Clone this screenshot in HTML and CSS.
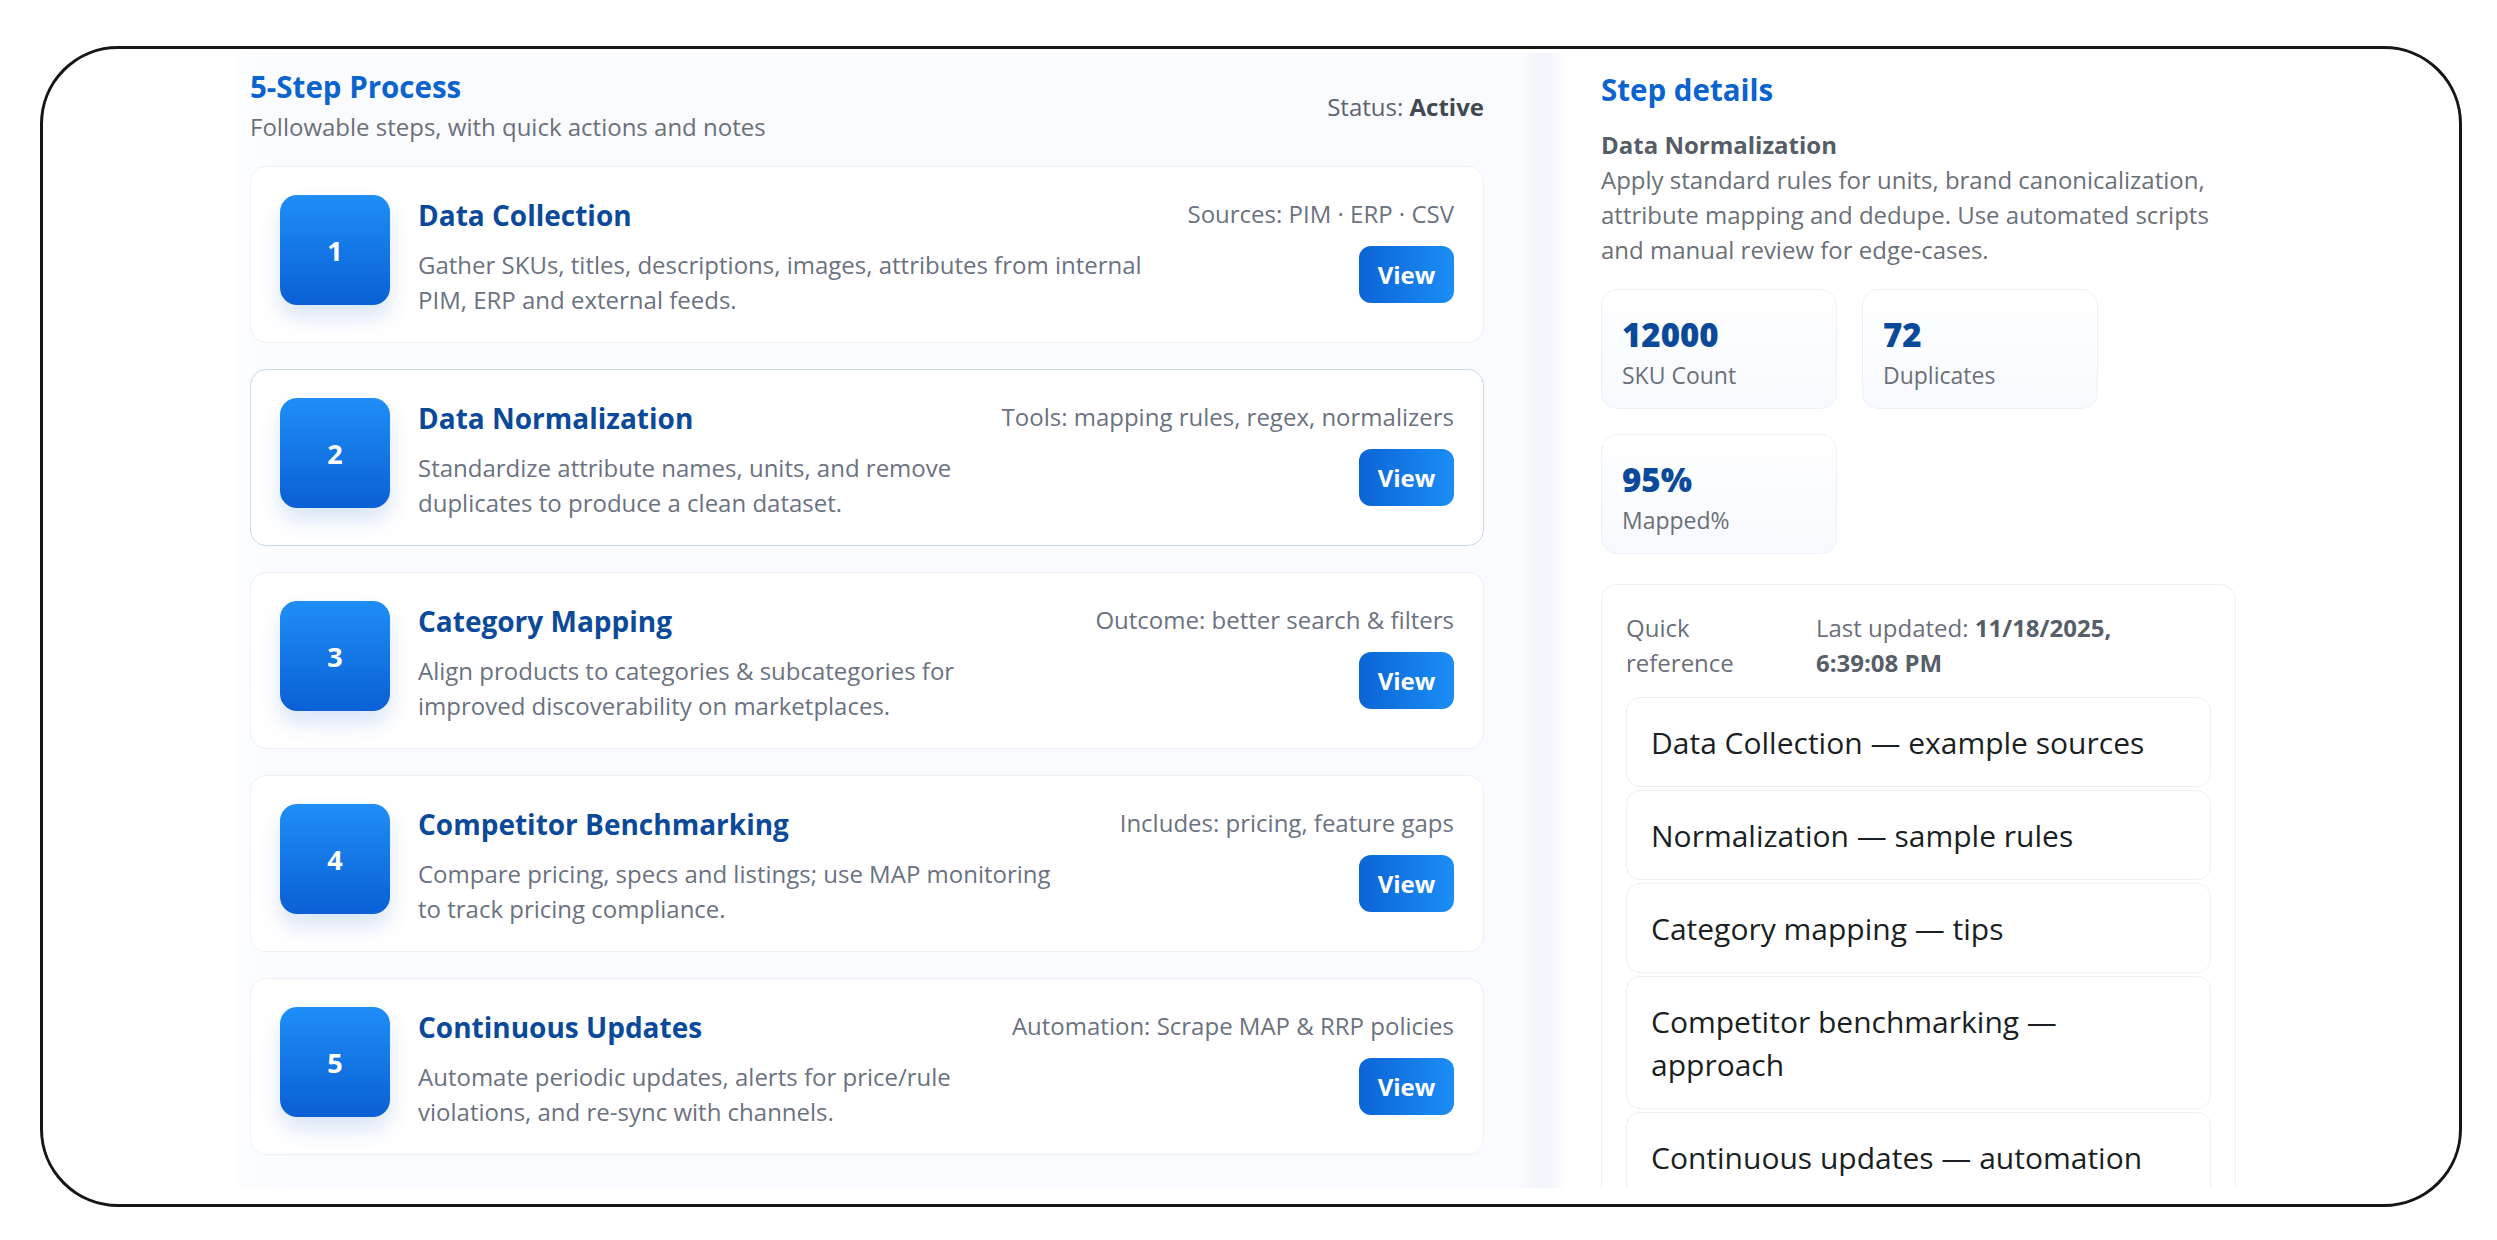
FILE: index.html
```html
<!DOCTYPE html>
<html lang="en">

<head>
  <meta charset="UTF-8">
  <meta name="viewport" content="width=device-width, initial-scale=1.0">
  <title>5-Step Process</title>
  <link rel="stylesheet" href="styles.css">
</head>

<body>
  <div class="frame">
    <div class="screen">
      <main class="layout">

        <!-- Left: the process steps -->
        <section class="process">
          <header class="process-head">
            <div>
              <h1 class="panel-title">5-Step Process</h1>
              <p class="panel-sub">Followable steps, with quick actions and notes</p>
            </div>
            <div class="status">Status: <strong>Active</strong></div>
          </header>

          <ol class="steps">
            <li class="step">
              <div class="step-num">1</div>
              <div class="step-body">
                <h2>Data Collection</h2>
                <p>Gather SKUs, titles, descriptions, images, attributes from internal PIM, ERP and external feeds.</p>
              </div>
              <div class="step-side">
                <span class="step-meta">Sources: PIM · ERP · CSV</span>
                <button class="view-btn">View</button>
              </div>
            </li>
            <li class="step active">
              <div class="step-num">2</div>
              <div class="step-body">
                <h2>Data Normalization</h2>
                <p>Standardize attribute names, units, and remove duplicates to produce a clean dataset.</p>
              </div>
              <div class="step-side">
                <span class="step-meta">Tools: mapping rules, regex, normalizers</span>
                <button class="view-btn">View</button>
              </div>
            </li>
            <li class="step">
              <div class="step-num">3</div>
              <div class="step-body">
                <h2>Category Mapping</h2>
                <p>Align products to categories &amp; subcategories for improved discoverability on marketplaces.</p>
              </div>
              <div class="step-side">
                <span class="step-meta">Outcome: better search &amp; filters</span>
                <button class="view-btn">View</button>
              </div>
            </li>
            <li class="step">
              <div class="step-num">4</div>
              <div class="step-body">
                <h2>Competitor Benchmarking</h2>
                <p>Compare pricing, specs and listings; use MAP monitoring to track pricing compliance.</p>
              </div>
              <div class="step-side">
                <span class="step-meta">Includes: pricing, feature gaps</span>
                <button class="view-btn">View</button>
              </div>
            </li>
            <li class="step">
              <div class="step-num">5</div>
              <div class="step-body">
                <h2>Continuous Updates</h2>
                <p>Automate periodic updates, alerts for price/rule violations, and re-sync with channels.</p>
              </div>
              <div class="step-side">
                <span class="step-meta">Automation: Scrape MAP &amp; RRP policies</span>
                <button class="view-btn">View</button>
              </div>
            </li>
          </ol>
        </section>

        <!-- Right: details of the selected step -->
        <aside class="details">
          <h2 class="panel-title">Step details</h2>
          <h3 class="details-name">Data Normalization</h3>
          <p class="details-text">Apply standard rules for units, brand canonicalization, attribute mapping and dedupe. Use automated scripts and manual review for edge-cases.</p>

          <div class="stats">
            <div class="stat">
              <div class="stat-value">12000</div>
              <div class="stat-label">SKU Count</div>
            </div>
            <div class="stat">
              <div class="stat-value">72</div>
              <div class="stat-label">Duplicates</div>
            </div>
            <div class="stat">
              <div class="stat-value">95%</div>
              <div class="stat-label">Mapped%</div>
            </div>
          </div>

          <div class="quick-ref">
            <div class="qr-head">
              <span class="qr-label">Quick reference</span>
              <span class="qr-updated">Last updated: <strong>11/18/2025, 6:39:08 PM</strong></span>
            </div>
            <ul class="qr-list">
              <li>Data Collection — example sources</li>
              <li>Normalization — sample rules</li>
              <li>Category mapping — tips</li>
              <li>Competitor benchmarking — approach</li>
              <li>Continuous updates — automation</li>
            </ul>
          </div>
        </aside>

      </main>
    </div>
  </div>
</body>

</html>
```

FILE: styles.css
```css
/* General page */
body {
  margin: 0;
  background: #fff;
  font-family: "Open Sans", "Noto Sans", Arial, sans-serif;
  color: #1f2328;
}

/* Rounded outer frame */
.frame {
  box-sizing: border-box;
  width: 2422px;
  height: 1161px;
  margin: 46px 0 0 40px;
  border: 3px solid #161616;
  border-radius: 78px;
  overflow: hidden;
  background: #fff;
}

/* The captured page inside the frame */
.screen {
  height: 1139px;
  padding-top: 4px;
  box-sizing: border-box;
  overflow: hidden;
}

.layout {
  display: grid;
  grid-template-columns: 1329px 671px;
  height: 100%;
  margin-left: 193px;
}

/* Left panel */
.process {
  padding: 16px 81px 0 14px;
  background: linear-gradient(90deg, #fcfdff 0, #fafbfe 60px, #fafbfe 1284px, #f1f4f9 1304px, #f5f7fb 1319px, #fff 100%);
}

.process-head {
  display: flex;
  justify-content: space-between;
  align-items: center;
  margin-bottom: 22px;
}

.panel-title {
  margin: 0;
  font-size: 29.5px;
  line-height: 36px;
  font-weight: 700;
  color: #0b63ce;
}

.panel-sub {
  margin: 5px 0 0;
  font-size: 24px;
  line-height: 34px;
  color: #6b7078;
}

.status {
  font-size: 24px;
  color: #5b6370;
}

.status strong {
  color: #404852;
}

/* Steps */
.steps {
  list-style: none;
  margin: 0;
  padding: 0;
  display: flex;
  flex-direction: column;
  gap: 26px;
}

.step {
  display: flex;
  align-items: flex-start;
  padding: 28px 29px 25px;
  border: 1px solid #edf1f6;
  border-radius: 16px;
  background: #fff;
}

.step.active {
  border-color: #c9d8ee;
}

.step-num {
  flex: 0 0 110px;
  height: 110px;
  display: flex;
  align-items: center;
  justify-content: center;
  border-radius: 17px;
  background: linear-gradient(180deg, #1f8ef6 0%, #0a60d4 100%);
  box-shadow: 0 12px 22px rgba(10, 90, 200, 0.16);
  color: #fff;
  font-size: 27px;
  font-weight: 700;
}

.step-body {
  flex: 1;
  margin-left: 28px;
}

.step-body h2 {
  margin: 0;
  font-size: 28px;
  line-height: 40px;
  font-weight: 700;
  color: #0b4a9a;
}

.step-body p {
  margin: 12px 0 0;
  font-size: 24px;
  line-height: 35px;
  color: #6b7280;
}

.step-side {
  display: flex;
  flex-direction: column;
  align-items: flex-end;
  margin-left: 44px;
  padding-top: 2px;
}

.step-meta {
  font-size: 24px;
  line-height: 34px;
  color: #6b7280;
  white-space: nowrap;
}

.view-btn {
  margin-top: 15px;
  width: 95px;
  height: 57px;
  border: none;
  border-radius: 12px;
  background: linear-gradient(90deg, #0b64d5 0%, #1b8ef5 100%);
  color: #fff;
  font-family: inherit;
  font-size: 24px;
  font-weight: 700;
  cursor: pointer;
}

/* Right panel */
.details {
  padding: 19px 0 0 36px;
  background: #fff;
}

.details-name {
  margin: 20px 0 0;
  font-size: 24px;
  line-height: 34px;
  font-weight: 700;
  color: #555d68;
}

.details-text {
  margin: 0;
  width: 635px;
  font-size: 24px;
  line-height: 35px;
  color: #6b7078;
}

.stats {
  display: flex;
  flex-wrap: wrap;
  gap: 25px;
  margin-top: 22px;
}

.stat {
  box-sizing: border-box;
  width: 236px;
  height: 120px;
  padding: 25px 20px 18px;
  border: 1px solid #eef2f8;
  border-radius: 16px;
  background: linear-gradient(180deg, #fff 0%, #f6f9fe 100%);
}

.stat-value {
  font-size: 33px;
  line-height: 40px;
  font-weight: 800;
  color: #0b4a9a;
}

.stat-label {
  margin-top: 5px;
  font-size: 23px;
  line-height: 30px;
  color: #6b7078;
}

/* Quick reference */
.quick-ref {
  width: 635px;
  box-sizing: border-box;
  margin-top: 30px;
  padding: 25px 24px 0;
  border: 1px solid #edf1f6;
  border-radius: 16px;
  background: #fff;
}

.qr-head {
  display: flex;
  gap: 70px;
  font-size: 24px;
  line-height: 35px;
  color: #6b7078;
}

.qr-label {
  width: 120px;
}

.qr-updated {
  width: 330px;
}

.qr-updated strong {
  color: #565e69;
}

.qr-list {
  list-style: none;
  margin: 17px 0 0;
  padding: 0;
}

.qr-list li {
  margin-bottom: 3px;
  padding: 23px 24px 22px;
  border: 1px solid #edf1f6;
  border-radius: 14px;
  font-size: 30px;
  line-height: 43px;
  color: #1b1f24;
}
```
